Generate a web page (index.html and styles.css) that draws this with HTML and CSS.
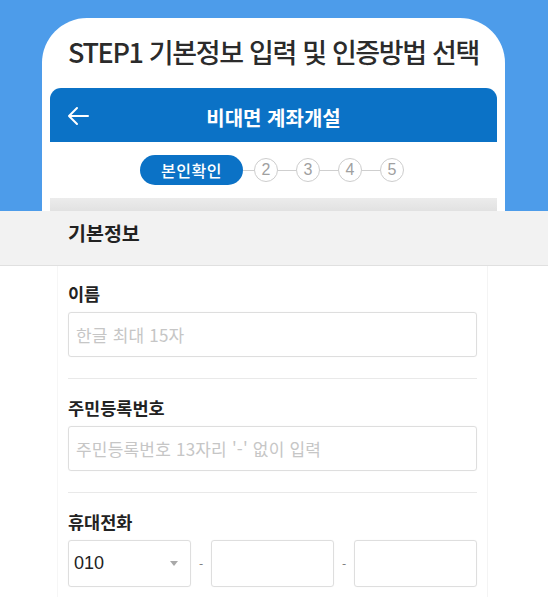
FILE: index.html
```html
<!DOCTYPE html>
<html lang="ko">
<head>
<meta charset="utf-8">
<link rel="stylesheet" href="styles.css">
</head>
<body>
<div class="page">
  <section class="hero">
    <div class="card">
      <h1 class="title">STEP1 기본정보 입력 및 인증방법 선택</h1>
      <div class="appbar">
        <svg class="back" width="22" height="20" viewBox="0 0 22 20"><path d="M21 10H2M10 2L2 10l8 8" fill="none" stroke="#fff" stroke-width="2" stroke-linecap="round" stroke-linejoin="round"/></svg>
        <span class="appbar-title">비대면 계좌개설</span>
      </div>
      <div class="steps">
        <span class="pill">본인확인</span>
        <span class="line short"></span>
        <span class="dot">2</span>
        <span class="line"></span>
        <span class="dot">3</span>
        <span class="line"></span>
        <span class="dot">4</span>
        <span class="line"></span>
        <span class="dot">5</span>
      </div>
      <div class="band"></div>
    </div>
  </section>
  <section class="sheet">
    <div class="sheet-head">기본정보</div>
    <div class="form">
      <div class="field">
        <div class="label">이름</div>
        <div class="input"><span class="ph">한글 최대 15자</span></div>
      </div>
      <div class="field">
        <div class="label">주민등록번호</div>
        <div class="input"><span class="ph">주민등록번호 13자리 '-' 없이 입력</span></div>
      </div>
      <div class="field last">
        <div class="label">휴대전화</div>
        <div class="phone">
          <div class="input select"><span class="val">010</span><span class="caret"></span></div>
          <span class="sep">-</span>
          <div class="input"></div>
          <span class="sep">-</span>
          <div class="input"></div>
        </div>
      </div>
    </div>
  </section>
</div>
</body>
</html>
```
FILE: styles.css
```css
* { box-sizing: border-box; margin: 0; padding: 0; }
html, body { width: 548px; height: 597px; overflow: hidden; }
body {
  background: #fff;
  font-family: "Noto Sans CJK KR", "Noto Sans", "Liberation Sans", sans-serif;
  color: #222;
}
.page { width: 548px; height: 597px; display: flex; flex-direction: column; overflow: hidden; }

.hero {
  height: 211px;
  flex: none;
  background: #4d9cea;
  padding-top: 18px;
  display: flex;
  justify-content: flex-start;
  padding-left: 42px;
  overflow: hidden;
}
.card {
  width: 463px;
  height: 240px;
  flex: none;
  background: #fff;
  border-radius: 45px 45px 0 0;
  padding: 0 8px;
  display: flex;
  flex-direction: column;
}
.title {
  height: 70px;
  line-height: 68px;
  font-size: 27px;
  font-weight: 500;
  color: #2b2b2b;
  text-align: center;
  letter-spacing: -1.35px;
  white-space: nowrap;
}
.appbar {
  height: 54px;
  flex: none;
  background: #0b72c6;
  border-radius: 11px 11px 0 0;
  display: flex;
  align-items: center;
  justify-content: center;
  position: relative;
}
.back { position: absolute; left: 17px; top: 18px; }
.appbar-title {
  color: #fff;
  font-size: 20px;
  font-weight: 700;
  letter-spacing: 0;
  margin-top: 4px;
}
.steps {
  height: 56px;
  flex: none;
  display: flex;
  align-items: center;
  padding-left: 90px;
}
.pill {
  width: 103px;
  height: 30px;
  border-radius: 15px;
  background: #0b72c6;
  color: #fff;
  font-size: 16px;
  font-weight: 500;
  display: flex;
  align-items: center;
  justify-content: center;
  letter-spacing: 0.5px;
}
.line { width: 18px; height: 1px; background: #cfcfcf; }
.line.short { width: 11px; }
.dot {
  width: 24px;
  height: 24px;
  border: 1px solid #cdcdcd;
  border-radius: 50%;
  color: #a0a0a0;
  font-family: "Liberation Sans", sans-serif;
  font-size: 16px;
  display: flex;
  align-items: center;
  justify-content: center;
}
.band {
  height: 20px;
  flex: none;
  background: linear-gradient(#ececec, #dcdcdc);
}

.sheet { flex: 1; min-height: 0; background: #fff; display: flex; flex-direction: column; overflow: hidden; }
.sheet-head {
  height: 55px;
  flex: none;
  background: #f2f2f2;
  border-bottom: 1px solid #e0e0e0;
  padding-left: 68px;
  font-size: 19.5px;
  font-weight: 700;
  line-height: 44px;
  color: #222;
}
.form {
  flex: 1;
  margin-left: 57px;
  width: 431px;
  border-left: 1px solid #f6f6f6;
  border-right: 1px solid #f4f4f4;
  padding: 0 10px;
}
.field {
  padding: 17px 0 21px;
  border-bottom: 1px solid #e9e9e9;
}
.field + .field { padding-top: 18px; }
.field.last { border-bottom: none; padding-bottom: 0; }
.label {
  font-size: 17.5px;
  font-weight: 700;
  line-height: 22px;
  margin-bottom: 7px;
  color: #222;
}
.input {
  height: 45px;
  border: 1px solid #dedede;
  border-radius: 3px;
  box-shadow: 0 0 1px rgba(0,0,0,0.08);
  display: flex;
  align-items: center;
  padding-left: 7px;
}
.ph { color: #c6c6c6; font-size: 17px; letter-spacing: 0.2px; }
.phone {
  display: grid;
  grid-template-columns: 1fr 20px 1fr 20px 1fr;
  align-items: center;
}
.phone .input { height: 47px; }
.select { justify-content: space-between; padding-left: 5px; padding-right: 12px; }
.val { font-family: "Liberation Sans", sans-serif; font-size: 18px; color: #222; }
.caret {
  width: 0; height: 0;
  border-left: 4px solid transparent;
  border-right: 4px solid transparent;
  border-top: 5px solid #a9a9a9;
}
.sep { text-align: center; color: #777; font-size: 12px; }
```
